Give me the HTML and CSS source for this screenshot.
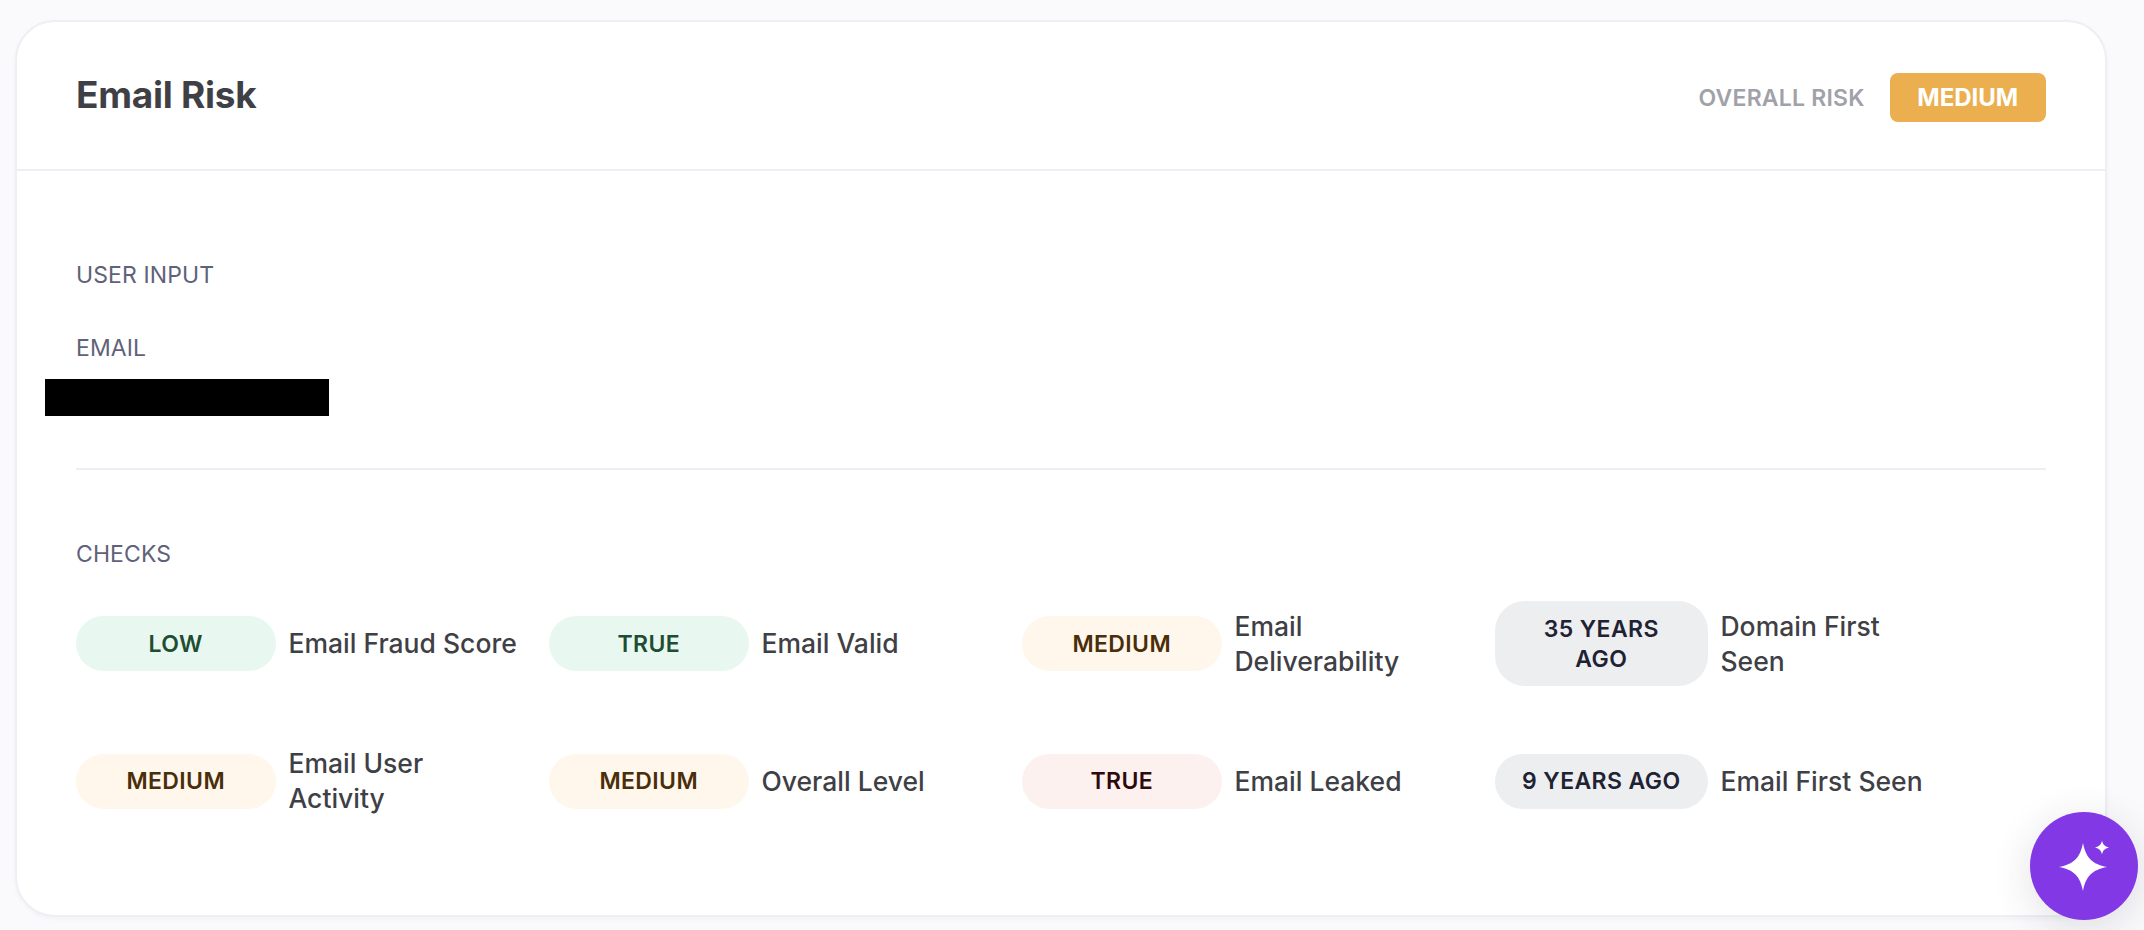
FILE: index.html
```html
<!DOCTYPE html>
<html lang="en">
<head>
<meta charset="utf-8">
<title>Email Risk</title>
<link rel="stylesheet" href="styles.css">
</head>
<body>
<main class="card">
  <header class="card-header">
    <h1 class="title">Email Risk</h1>
    <div class="risk">
      <span class="risk-label">OVERALL RISK</span>
      <span class="risk-badge">MEDIUM</span>
    </div>
  </header>
  <section class="card-body">
    <div class="section-label">USER INPUT</div>
    <div class="section-label field-label">EMAIL</div>
    <div class="redacted"></div>
    <hr class="divider">
    <div class="section-label">CHECKS</div>
    <div class="checks">
      <div class="check"><span class="pill pill-green">LOW</span><span class="check-name">Email Fraud Score</span></div>
      <div class="check"><span class="pill pill-green">TRUE</span><span class="check-name">Email Valid</span></div>
      <div class="check"><span class="pill pill-amber">MEDIUM</span><span class="check-name">Email<br>Deliverability</span></div>
      <div class="check"><span class="pill pill-gray pill-wide">35 YEARS<br>AGO</span><span class="check-name">Domain First<br>Seen</span></div>
      <div class="check"><span class="pill pill-amber">MEDIUM</span><span class="check-name">Email User<br>Activity</span></div>
      <div class="check"><span class="pill pill-amber">MEDIUM</span><span class="check-name">Overall Level</span></div>
      <div class="check"><span class="pill pill-red">TRUE</span><span class="check-name">Email Leaked</span></div>
      <div class="check"><span class="pill pill-gray pill-wide">9 YEARS AGO</span><span class="check-name">Email First Seen</span></div>
    </div>
  </section>
</main>
<button class="fab" type="button" aria-label="Assistant">
  <svg class="fab-icon" viewBox="0 0 108 108" width="108" height="108" aria-hidden="true">
    <path d="M53 31C56 46 62 52 77 55C62 58 56 64 53 79C50 64 44 58 29 55C44 52 50 46 53 31Z"/>
    <path d="M72 28.500C72.800 32.500 74.500 34.200 79 35.500C74.500 36.800 72.800 38.500 72 42.500C71.200 38.500 69.500 36.800 65 35.500C69.500 34.200 71.200 32.500 72 28.500Z"/>
  </svg>
</button>
</body>
</html>
```
FILE: styles.css
```css
* { box-sizing: border-box; }
html, body { margin: 0; height: 100%; }
body {
  background: #fafafc;
  padding: 20px 37px 14px 15px;
  font-family: "Inter", "Liberation Sans", sans-serif;
  overflow: hidden;
}
.card {
  height: 897px;
  background: #fff;
  border: 2px solid #eeeef4;
  border-radius: 40px;
  box-shadow: 0 2px 4px rgba(40, 40, 70, 0.04);
}
.card-header {
  display: flex;
  align-items: center;
  justify-content: space-between;
  height: 149px;
  padding: 0 59px;
  border-bottom: 2px solid #eeeef4;
}
.title {
  margin: 0 0 2px;
  font-size: 37px;
  font-weight: 700;
  letter-spacing: -0.25px;
  color: #3f3f46;
}
.risk { display: flex; align-items: center; gap: 25px; margin-top: 4px; }
.risk-label {
  font-size: 23px;
  font-weight: 600;
  letter-spacing: 0.2px;
  color: #a1a1aa;
}
.risk-badge {
  width: 156.500px;
  height: 49px;
  display: flex;
  align-items: center;
  justify-content: center;
  background: #ebaf4f;
  border-radius: 8px;
  color: #fff;
  font-size: 24px;
  font-weight: 700;
}
.card-body { padding: 89px 59px 0; }
.section-label {
  font-size: 23px;
  line-height: 30px;
  letter-spacing: 0.1px;
  color: #5f6278;
}
.field-label { margin-top: 43px; }
.redacted {
  width: 284px;
  height: 37px;
  margin: 16px 0 0 -31px;
  background: #000;
}
.divider {
  height: 2px;
  margin: 52px 0 69px;
  border: 0;
  background: #eeeef4;
}
.checks {
  display: grid;
  grid-template-columns: repeat(4, 443px);
  column-gap: 30px;
  row-gap: 60px;
  align-items: center;
  margin-top: 32px;
}
.check { display: flex; align-items: center; gap: 13px; }
.pill {
  flex: none;
  width: 199.500px;
  padding: 12.500px 16px;
  border-radius: 30px;
  text-align: center;
  font-size: 23px;
  font-weight: 600;
  letter-spacing: 0.4px;
  line-height: 30px;
}
.pill-wide { width: 212.500px; }
.pill-green { background: #e8f8f0; color: #1f4d33; }
.pill-amber { background: #fff7ec; color: #4a2e0a; }
.pill-red { background: #fdf1f0; color: #2e0a0a; }
.pill-gray { background: #edeef0; color: #1f2233; }
.check-name {
  flex: 1;
  font-size: 26.500px;
  line-height: 35px;
  font-weight: 500;
  color: #3f3f46;
}
.fab {
  position: fixed;
  left: 2030px;
  top: 812px;
  width: 108px;
  height: 108px;
  padding: 0;
  border: 0;
  border-radius: 50%;
  background: #8338e6;
  box-shadow: 0 8px 40px rgba(40, 40, 70, 0.14);
}
.fab-icon { display: block; fill: #fff; }
```
